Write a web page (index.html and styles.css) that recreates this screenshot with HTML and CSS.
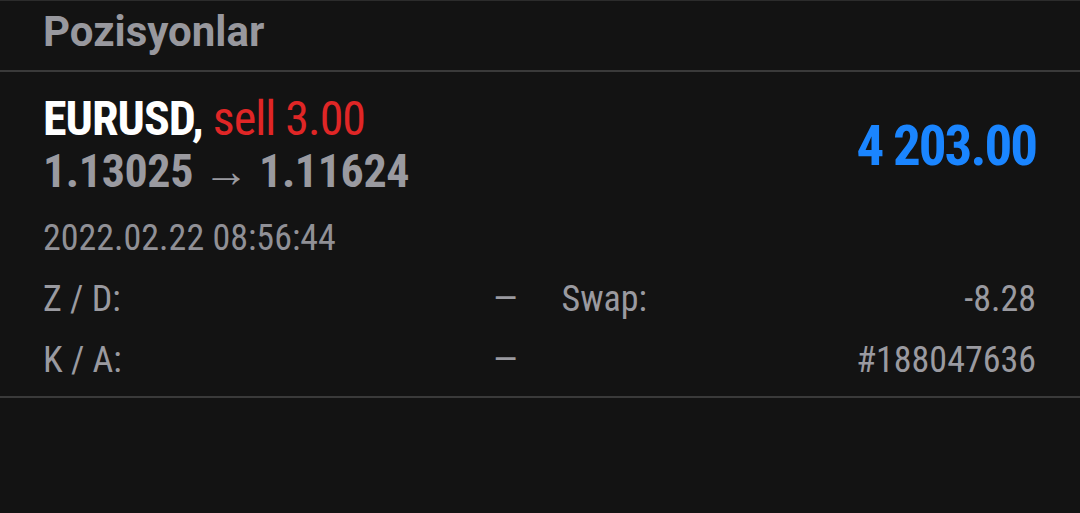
FILE: index.html
```html
<!DOCTYPE html>
<html lang="tr">
<head>
    <meta charset="UTF-8">
    <title>Pozisyonlar</title>
    <link rel="stylesheet" href="styles.css">
</head>
<body>

<div class="screen">
    <div class="section-title">Pozisyonlar</div>

    <div class="position">
        <div class="position-top">
            <div class="position-info">
                <div class="symbol-line">
                    <span class="symbol">EURUSD,</span> <span class="side sell">sell 3.00</span>
                </div>
                <div class="price-line">1.13025 &rarr; 1.11624</div>
            </div>
            <div class="profit">4 203.00</div>
        </div>

        <div class="open-time">2022.02.22 08:56:44</div>

        <div class="details">
            <div class="detail">
                <span class="label">Z / D:</span>
                <span class="value">&mdash;</span>
            </div>
            <div class="detail">
                <span class="label">Swap:</span>
                <span class="value">-8.28</span>
            </div>
            <div class="detail">
                <span class="label">K / A:</span>
                <span class="value">&mdash;</span>
            </div>
            <div class="detail">
                <span class="label"></span>
                <span class="value">#188047636</span>
            </div>
        </div>
    </div>
</div>

</body>
</html>
```

FILE: styles.css
```css
body {
    background-color: #131313;
    margin: 0;
    padding: 0;
    font-family: "Roboto Condensed", Roboto, "Liberation Sans", sans-serif;
    font-stretch: condensed;
    color: #9a9aa0;
}

.screen {
    border-top: 1px solid #2c2c2c;
    height: 512px;
}

.section-title {
    font-family: Roboto, "Liberation Sans", sans-serif;
    font-stretch: normal;
    font-size: 42px;
    font-weight: bold;
    line-height: 48px;
    padding: 7px 43px 14px;
    color: #98989e;
    border-bottom: 2px solid #3a3a3a;
}

.position {
    padding: 21px 44px 5px 43px;
    border-bottom: 2px solid #3a3a3a;
}

.position-top {
    display: flex;
    align-items: center;
    justify-content: space-between;
}

.symbol-line {
    font-size: 48px;
    line-height: 52px;
    letter-spacing: -1px;
}

.symbol {
    color: #ffffff;
    font-weight: bold;
}

.sell {
    color: #e02626;
}

.price-line {
    font-size: 46px;
    font-weight: bold;
    line-height: 52px;
    letter-spacing: -0.4px;
    color: #9a9aa0;
}

.profit {
    font-size: 55px;
    font-weight: bold;
    letter-spacing: -2px;
    color: #1a85ff;
    padding-top: 2px;
}

.open-time {
    margin-top: 11px;
    font-size: 36px;
    line-height: 61px;
    color: #909096;
}

.details {
    display: grid;
    grid-template-columns: 1fr 1fr;
    column-gap: 44px;
}

.detail {
    display: flex;
    justify-content: space-between;
    font-size: 36px;
    line-height: 61px;
    color: #9a9aa0;
}
```
